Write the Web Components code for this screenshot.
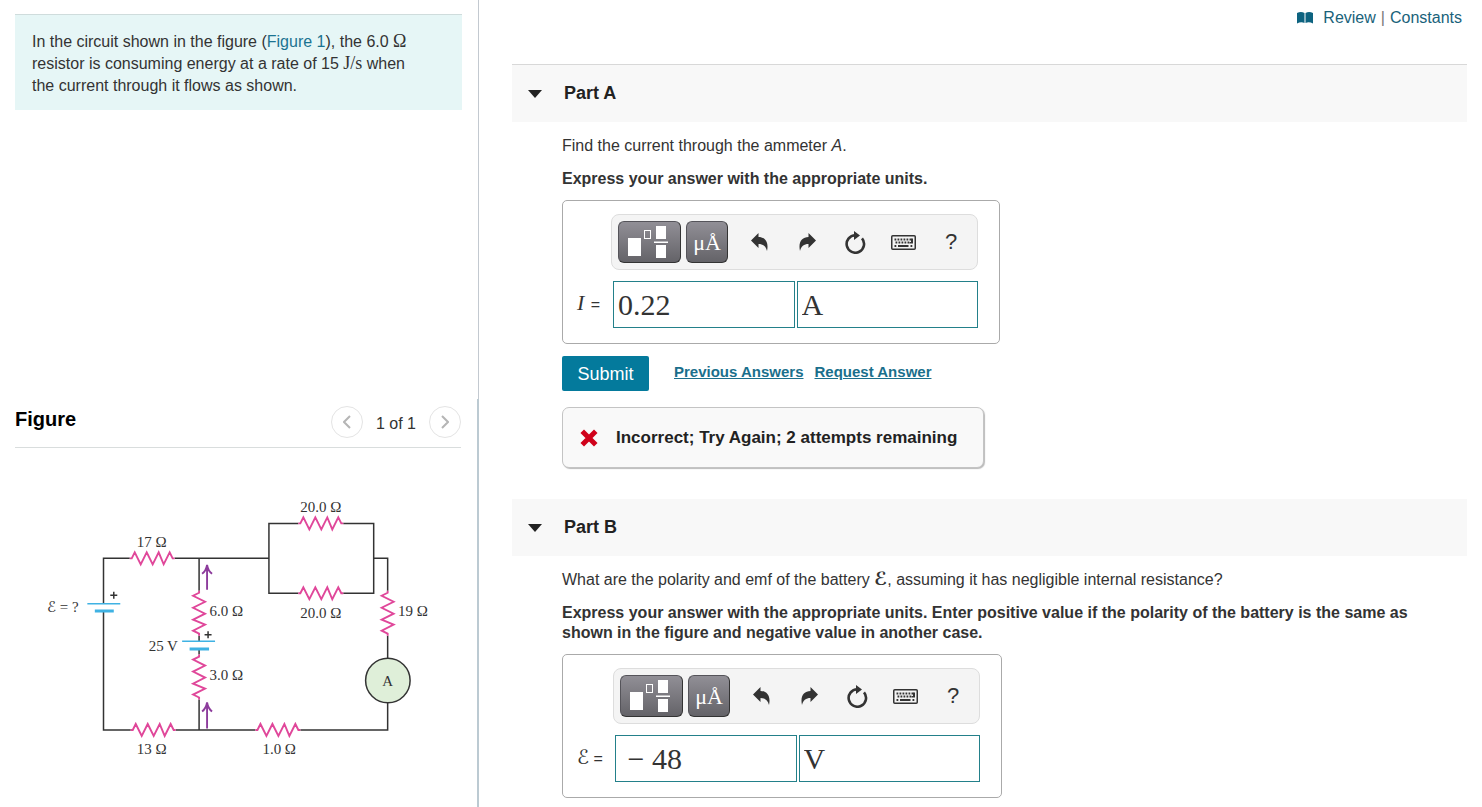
<!DOCTYPE html>
<html lang="en">
<head>
<meta charset="utf-8">
<title>Circuit problem</title>
<style>
  body {
    margin: 0;
    background: #fff;
    color: #333;
    font: 16px/20px "Liberation Sans", Arial, sans-serif;
  }
  a { color: #1b7391; text-decoration: none; }
  p { margin: 0; }
  .math { font-family: "Liberation Serif", "Times New Roman", serif; font-size: 18px; line-height: 0; }
  .script { font-family: "DejaVu Serif", "DejaVu Sans", serif; font-size: 18px; font-weight: bold; line-height: 0; }
</style>
</head>
<body>

<problem-page>
  <problem-intro slot="intro">In the circuit shown in the figure (<a href="#figure">Figure 1</a>), the 6.0 <span class="math">Ω</span> resistor is consuming energy at a rate of 15 <span class="math">J/s</span> when the current through it flows as shown.</problem-intro>
  <figure-viewer slot="figure" heading="Figure" count="1 of 1">
    <circuit-diagram></circuit-diagram>
  </figure-viewer>

  <page-links></page-links>

  <problem-part heading="Part A" class="first">
    <p slot="question">Find the current through the ammeter <i>A</i>.</p>
    <p slot="instructions">Express your answer with the appropriate units.</p>
    <answer-box symbol="I" value="0.22" unit="A"></answer-box>
    <answer-actions></answer-actions>
    <answer-feedback>Incorrect; Try Again; 2 attempts remaining</answer-feedback>
  </problem-part>

  <problem-part heading="Part B">
    <p slot="question">What are the polarity and emf of the battery <span class="script">ℰ</span>, assuming it has negligible internal resistance?</p>
    <p slot="instructions">Express your answer with the appropriate units. Enter positive value if the polarity of the battery is the same as shown in the figure and negative value in another case.</p>
    <answer-box class="wide" symbol="ℰ" value=" − 48" unit="V"></answer-box>
  </problem-part>
</problem-page>

<script>
(function () {
  function attach(el, html) {
    el.attachShadow({ mode: "open" }).innerHTML =
      "<style>*{box-sizing:border-box}</style>" + html;
  }

  class ProblemPage extends HTMLElement {
    constructor() {
      super();
      attach(this, `
        <style>
          :host {
            display: grid;
            grid-template-columns: 479fr 1003fr;
            min-height: 100vh;
          }
          aside {
            display: grid;
            grid-template-rows: 399fr 408fr;
          }
          .intro {
            padding: 14px 16px 14px 15px;
            border-right: 1px solid #c3c9d0;
          }
          .figure {
            padding: 0 16px 0 15px;
            border-right: 2px solid #bccad2;
          }
          main { padding: 8px 15px 9px 33px; }
        </style>
        <aside>
          <div class="intro"><slot name="intro"></slot></div>
          <div class="figure"><slot name="figure"></slot></div>
        </aside>
        <main><slot></slot></main>
      `);
    }
  }

  class ProblemIntro extends HTMLElement {
    constructor() {
      super();
      attach(this, `
        <style>
          :host {
            display: block;
            box-sizing: border-box;
            padding: 16px 32px 13px 17px;
            border-top: 1px solid #cfdcdc;
            background: #e6f6f6;
            line-height: 22px;
          }
        </style>
        <slot></slot>
      `);
    }
  }

  class FigureViewer extends HTMLElement {
    constructor() {
      super();
      attach(this, `
        <style>
          :host { display: block; }
          header {
            display: flex;
            align-items: flex-start;
            padding: 7px 0 5px;
            border-bottom: 1px solid #d9dddd;
          }
          h2 {
            flex: 1;
            margin: 0;
            color: #000;
            font-size: 20px;
            line-height: 26px;
          }
          nav { display: flex; gap: 13px; line-height: 36px; }
          button {
            display: grid;
            place-items: center;
            width: 32px;
            height: 32px;
            padding: 0;
            border: 1px solid #e4e4e4;
            border-radius: 50%;
            background: #fff;
          }
          svg { fill: none; stroke: #b5b5b5; stroke-width: 2; }
          .body { padding-top: 42px; }
        </style>
        <header>
          <h2 id="figure">${this.getAttribute("heading")}</h2>
          <nav>
            <button aria-label="Previous figure"><svg width="8" height="14"><path d="M7 1 1 7l6 6"/></svg></button>
            <span>${this.getAttribute("count")}</span>
            <button aria-label="Next figure"><svg width="8" height="14"><path d="m1 1 6 6-6 6"/></svg></button>
          </nav>
        </header>
        <div class="body"><slot></slot></div>
      `);
    }
  }

  // Zigzag resistors, 45 units long, starting at x,y.
  const ZIGZAG = [[0, 0], [2, 0], [5, -6], [11, 6], [17, -6], [23, 6], [29, -6], [34, 6], [40, -6], [43, 0], [45, 0]];

  function resistor(x, y, vertical) {
    const points = ZIGZAG.map(([along, across]) =>
      vertical ? `${x + across},${y + along}` : `${x + along},${y + across}`);
    return `<polyline points="${points.join(" ")}"/>`;
  }

  class CircuitDiagram extends HTMLElement {
    constructor() {
      super();
      attach(this, `
        <style>
          :host { display: block; }
          svg { display: block; width: 100%; }
          .wires { fill: none; stroke: #333; stroke-width: 1.5; }
          .resistors { fill: none; stroke: #e0479a; stroke-width: 1.9; }
          .arrows { fill: none; stroke: #8d3c9c; stroke-width: 1.9; }
          .plates { stroke: #3fb2e3; }
          text {
            fill: #333;
            font-family: "Liberation Serif", "Times New Roman", serif;
            font-size: 15px;
          }
          .script { font-family: "DejaVu Serif", "DejaVu Sans", serif; }
        </style>
        <svg viewBox="15 490 447 280" role="img" aria-label="Circuit diagram">
          <g class="wires">
            <path d="M130 558.5H103.7V604M103.7 611V730.5H131M175 558.5H269.5M199.5 558.5V591M199.5 636V642M199.5 649V655M199.5 700V730.5"/>
            <path d="M299 523.5H269.5V593.5H299M344 523.5H374.5V593.5H344M374.5 558.5H388.5V591M388.5 636V659M388.5 703V730.5H301M256 730.5H176"/>
            <circle cx="388.7" cy="681" r="22.3" fill="#dfefd9"/>
          </g>
          <g class="resistors">
            ${resistor(130, 558.5)}
            ${resistor(131, 730.5)}
            ${resistor(256, 730.5)}
            ${resistor(299, 523.5)}
            ${resistor(299, 593.5)}
            ${resistor(199.5, 591, true)}
            ${resistor(199.5, 655, true)}
            ${resistor(388.5, 591, true)}
          </g>
          <g class="plates">
            <path stroke-width="1.5" d="M87.5 604H120.5M182.5 641.7H215.5"/>
            <path stroke-width="3" d="M95 611.3H114M190 649.3H209.5"/>
          </g>
          <g class="arrows">
            <path d="M207.5 590V566M202.5 574q4-3 5-9q1 6 5 9M207.5 729V704M202.5 712q4-3 5-9q1 6 5 9"/>
          </g>
          <path stroke="#333" stroke-width="1.5" d="M110.5 595.5H117.5M114 592V599M205 635H212M208.5 631.5V638.5"/>
          <text x="137" y="547">17 Ω</text>
          <text x="301" y="512">20.0 Ω</text>
          <text x="301" y="618">20.0 Ω</text>
          <text x="210" y="616">6.0 Ω</text>
          <text x="210" y="680">3.0 Ω</text>
          <text x="149" y="651">25 V</text>
          <text x="399" y="616">19 Ω</text>
          <text x="137" y="755">13 Ω</text>
          <text x="263" y="755">1.0 Ω</text>
          <text x="47" y="612"><tspan class="script">ℰ</tspan> = ?</text>
          <text x="388.5" y="686" text-anchor="middle">A</text>
        </svg>
      `);
    }
  }

  class PageLinks extends HTMLElement {
    constructor() {
      super();
      attach(this, `
        <style>
          :host {
            display: flex;
            justify-content: flex-end;
            align-items: center;
            gap: 5px;
            padding: 0 5px 36px 0;
            color: #777;
          }
          a { color: #19627a; text-decoration: none; }
          svg { margin-right: 5px; fill: #0d6380; }
        </style>
        <svg width="16" height="12"><path d="M0 1Q4-1 7.5 1V11Q4 9.5 0 11.5ZM8.5 1Q12-1 16 1V11.5Q12 9.5 8.5 11Z"/></svg>
        <a href="#review">Review</a>
        <span>|</span>
        <a href="#constants">Constants</a>
      `);
    }
  }

  class ProblemPart extends HTMLElement {
    constructor() {
      super();
      attach(this, `
        <style>
          :host { display: block; margin-top: 31px; }
          :host(.first) { margin-top: 0; }
          :host(.first) h2 { border-top: 1px solid #d8d8d8; }
          h2 { margin: 0; background: #f8f8f8; }
          button {
            display: flex;
            align-items: center;
            gap: 22px;
            width: 100%;
            padding: 16px;
            border: 0;
            background: none;
            color: #222;
            font: bold 18px/25px "Liberation Sans", Arial, sans-serif;
          }
          .body {
            display: flex;
            flex-direction: column;
            align-items: flex-start;
            padding: 14px 40px 0 50px;
          }
          .instructions { margin: 13px 0 11px; font-weight: bold; }
        </style>
        <h2>
          <button aria-expanded="true">
            <svg width="14" height="8"><path d="M0 0H14L7 8Z" fill="#222"/></svg>
            ${this.getAttribute("heading")}
          </button>
        </h2>
        <div class="body">
          <slot name="question"></slot>
          <div class="instructions"><slot name="instructions"></slot></div>
          <slot></slot>
        </div>
      `);
    }
  }

  const ICONS = {
    undo: `<svg width="17" height="18"><path d="M0 7.5 7.5 0V4C14 4 18 9 16 18C15 13.5 12 11 7.5 11V15Z"/></svg>`,
    redo: `<svg width="17" height="18"><path d="M17 7.5 9.5 0V4C3 4-1 9 1 18C2 13.5 5 11 9.5 11V15Z"/></svg>`,
    reset: `<svg width="21" height="23"><path d="M17 7.4A8.7 8.7 0 1 1 10.3 4.3" fill="none" stroke="#333" stroke-width="2.6"/><path d="M9 0 15 4.5 9 9Z"/></svg>`,
    keyboard: `<svg width="25" height="15"><rect x=".75" y=".75" width="23.5" height="13.5" rx="1" fill="none" stroke="#333" stroke-width="1.5"/><path d="M3.5 4.5H21.5M4.5 7.5H19" fill="none" stroke="#333" stroke-width="1.8" stroke-dasharray="1.8 1.2"/><path d="M20 3.5H22V8.5H18.5V7H20ZM3.5 10H5.3V12H3.5ZM7 10H17.5V12H7ZM19.5 10H21.3V12H19.5Z"/></svg>`
  };

  class AnswerBox extends HTMLElement {
    constructor() {
      super();
      attach(this, `
        <style>
          :host {
            display: grid;
            grid-template-columns: 34px 367px;
            row-gap: 11px;
            box-sizing: border-box;
            padding: 13px 21px 15px 14px;
            border: 1px solid #aaa;
            border-radius: 5px;
          }
          :host(.wide) { grid-template-columns: 36px 367px; }
          .toolbar {
            grid-column: 2;
            display: flex;
            align-items: center;
            height: 56px;
            padding: 0 2px 0 6px;
            border: 1px solid #ddd;
            border-radius: 8px;
            background: #f4f4f4;
          }
          button {
            display: grid;
            place-items: center;
            flex: 1;
            height: 42px;
            padding: 0;
            border: 0;
            background: none;
            color: #333;
            fill: #333;
            font: 22px/24px "Liberation Sans", Arial, sans-serif;
          }
          .tile {
            flex: none;
            width: 63px;
            margin-right: 5px;
            border: 1px solid #55545a;
            border-bottom-color: #333;
            border-right-color: #333;
            border-radius: 6px;
            background: linear-gradient(#918f96, #646368);
            color: #fff;
            fill: #fff;
          }
          .units {
            width: 42px;
            margin-right: 7px;
            padding-top: 2px;
            font-family: "Liberation Serif", "Times New Roman", serif;
          }
          label {
            align-self: center;
            padding-bottom: 3px;
          }
          i {
            margin-right: 2px;
            font: italic 22px/24px "Liberation Serif", "Times New Roman", serif;
          }
          :host(.wide) i {
            margin-right: 0;
            font-family: "DejaVu Serif", "DejaVu Sans", serif;
            font-size: 20px;
          }
          .inputs {
            display: grid;
            grid-template-columns: 1fr 1fr;
            gap: 2px;
            padding-left: 2px;
          }
          input {
            width: 100%;
            height: 47px;
            padding: 0 4px;
            border: 1px solid #23808a;
            border-radius: 0;
            outline: 0;
            background: #fff;
            color: #333;
            font: 30px/36px "Liberation Serif", "Times New Roman", serif;
          }
        </style>
        <div class="toolbar">
          <button class="tile" aria-label="Templates">
            <svg width="61" height="39"><path d="M9 15H22V33H9ZM37 3H47V16H37ZM37 22H47V35H37ZM35 18.5H49V20H35Z"/><rect x="25.5" y="7.5" width="6" height="8" fill="none" stroke="#fff"/></svg>
          </button>
          <button class="tile units">μÅ</button>
          <button aria-label="Undo">${ICONS.undo}</button>
          <button aria-label="Redo">${ICONS.redo}</button>
          <button aria-label="Reset">${ICONS.reset}</button>
          <button aria-label="Keyboard shortcuts">${ICONS.keyboard}</button>
          <button>?</button>
        </div>
        <label for="value"><i>${this.getAttribute("symbol")}</i> =</label>
        <div class="inputs">
          <input id="value" value="${this.getAttribute("value")}">
          <input aria-label="Units" value="${this.getAttribute("unit")}">
        </div>
      `);
    }
  }

  class AnswerActions extends HTMLElement {
    constructor() {
      super();
      attach(this, `
        <style>
          :host {
            display: flex;
            align-items: center;
            gap: 11px;
            margin: 12px 0 16px;
          }
          button {
            width: 87px;
            height: 35px;
            margin-right: 14px;
            border: 0;
            border-radius: 2px;
            background: #047a9c;
            color: #fff;
            font: 18px/20px "Liberation Sans", Arial, sans-serif;
          }
          a {
            padding-bottom: 3px;
            color: #1a6f8c;
            font-size: 15px;
            font-weight: bold;
            text-decoration: underline;
          }
        </style>
        <button>Submit</button>
        <a href="#previous">Previous Answers</a>
        <a href="#request">Request Answer</a>
      `);
    }
  }

  class AnswerFeedback extends HTMLElement {
    constructor() {
      super();
      attach(this, `
        <style>
          :host {
            display: flex;
            align-items: center;
            gap: 18px;
            box-sizing: border-box;
            padding: 18px 26px 17px 17px;
            border: 1px solid #c4c4c4;
            border-radius: 7px;
            box-shadow: 1px 1px 1px #bbb;
            background: #f9f9f9;
            color: #222;
            font-size: 17px;
            font-weight: bold;
            line-height: 24px;
          }
        </style>
        <svg width="18" height="18" aria-hidden="true"><path d="M4 4 14 14M14 4 4 14" stroke="#d0021b" stroke-width="5" stroke-linecap="square"/></svg>
        <span><slot></slot></span>
      `);
    }
  }

  customElements.define("problem-page", ProblemPage);
  customElements.define("problem-intro", ProblemIntro);
  customElements.define("figure-viewer", FigureViewer);
  customElements.define("circuit-diagram", CircuitDiagram);
  customElements.define("page-links", PageLinks);
  customElements.define("problem-part", ProblemPart);
  customElements.define("answer-box", AnswerBox);
  customElements.define("answer-actions", AnswerActions);
  customElements.define("answer-feedback", AnswerFeedback);
})();
</script>
</body>
</html>
